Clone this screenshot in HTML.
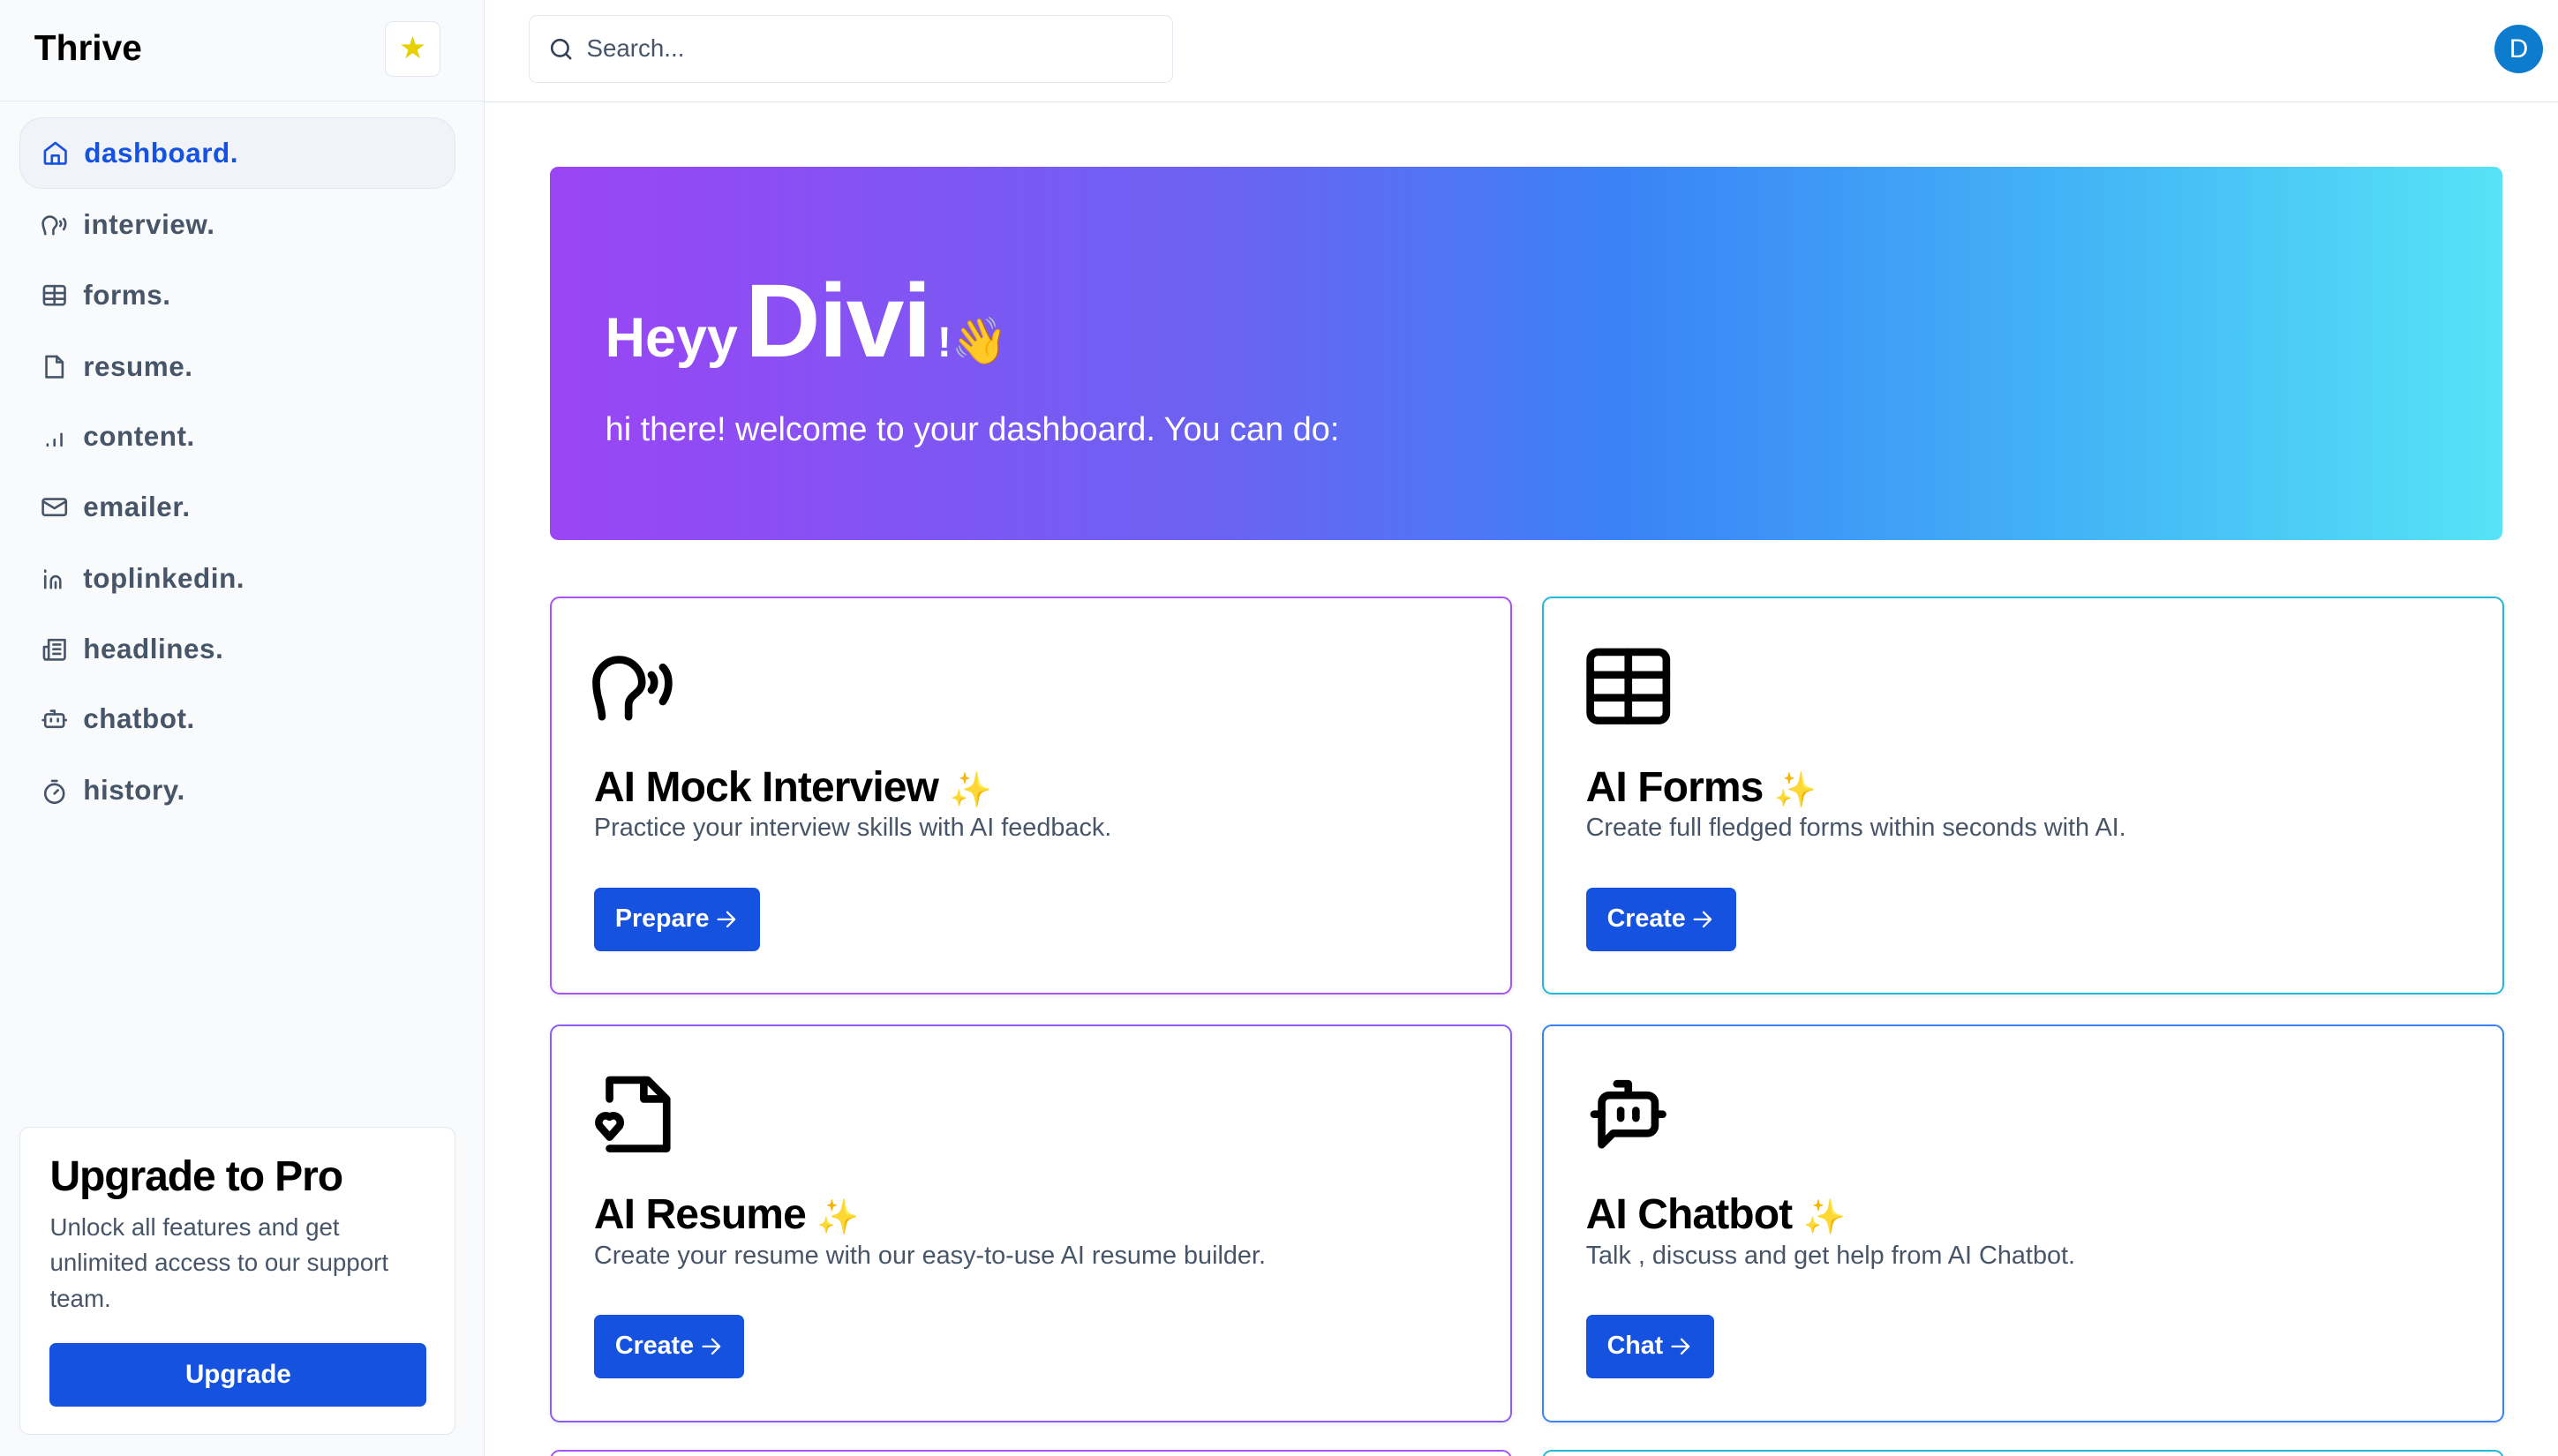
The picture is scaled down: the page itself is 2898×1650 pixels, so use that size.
<!DOCTYPE html>
<html><head><meta charset="utf-8"><style>
*{box-sizing:border-box;margin:0;padding:0}
html,body{width:2898px;height:1650px;overflow:hidden;background:#fff}
#w{zoom:1.8482;width:1568px;height:893px;position:relative;font-family:"Liberation Sans",sans-serif;color:#0f172a;overflow:hidden}
.abs{position:absolute}
#side{left:0;top:0;width:297px;height:893px;background:#f8fafc;border-right:1px solid #e2e8f0}
#sh{left:0;top:0;width:297px;height:62px;border-bottom:1px solid #e2e8f0}
.nav{position:absolute;left:12px;width:267px;height:44px;display:flex;align-items:center;padding-left:13px;font-size:17px;font-weight:bold;color:#475569;letter-spacing:.3px}
.nav svg{width:17px;height:17px;margin-right:9px;fill:none;stroke:currentColor;stroke-width:2;stroke-linecap:round;stroke-linejoin:round}
.card{position:absolute;width:590px;height:244px;border:1.5px solid;border-radius:6px;background:#fff;box-shadow:0 1px 3px rgba(0,0,0,.08)}
.card svg.ic{position:absolute;left:24px;top:26px;width:56px;height:56px;fill:none;stroke:#000;stroke-width:2;stroke-linecap:round;stroke-linejoin:round}
.card h3{position:absolute;left:26px;top:101px;font-size:26px;font-weight:bold;letter-spacing:-.5px;color:#000}
.card h3 span{font-size:21px}
.card p{position:absolute;left:26px;top:132px;font-size:15.6px;color:#475569}
.btn{position:absolute;left:26px;top:177px;height:39px;padding:0 13px;background:#1652e0;color:#fff;border-radius:4px;font-size:15.5px;font-weight:bold;display:flex;align-items:center}
.btn svg{width:15px;height:15px;margin-left:3px;fill:none;stroke:#fff;stroke-width:2;stroke-linecap:round;stroke-linejoin:round}
</style></head><body><div id="w">
<div id="side" class="abs">
<div id="sh" class="abs"></div>
<div class="abs" style="left:21px;top:17px;font-size:22px;font-weight:bold;color:#000">Thrive</div>
<div class="abs" style="left:236px;top:13px;width:34px;height:34px;border:1px solid #e2e8f0;border-radius:5px;background:#fff;color:#e6d000;font-size:19px;text-align:center;line-height:32px">★</div>
<div class="nav" style="top:72px;background:#f0f3f8;border:1px solid #e2e8f0;border-radius:14px;color:#1652e0"><svg viewBox="0 0 24 24"><path d="M3 10l9-7 9 7v10a1 1 0 0 1-1 1H4a1 1 0 0 1-1-1z"/><path d="M9 21v-7h6v7"/></svg>dashboard.</div>
<div class="nav" style="top:116px"><svg viewBox="0 0 24 24"><path d="M4 20c0-3-2-5-2-9a6 6 0 0 1 12 0c0 3-3 3-3 6v3"/><path d="M17 9c1 1 1 3 0 4M20 7c2 2 2 6 0 9"/></svg>interview.</div>
<div class="nav" style="top:159px"><svg viewBox="0 0 24 24"><rect x="3" y="4" width="18" height="16" rx="2"/><path d="M3 10h18M3 15h18M12 4v16"/></svg>forms.</div>
<div class="nav" style="top:203px"><svg viewBox="0 0 24 24"><path d="M14 3H5v18h14V8z"/><path d="M14 3v5h5"/></svg>resume.</div>
<div class="nav" style="top:246px"><svg viewBox="0 0 24 24"><path d="M6 19v-1M12 19v-5M18 19V9"/></svg>content.</div>
<div class="nav" style="top:289px"><svg viewBox="0 0 24 24"><rect x="2" y="5" width="20" height="14" rx="2"/><path d="M2 7l10 6 10-6"/></svg>emailer.</div>
<div class="nav" style="top:333px"><svg viewBox="0 0 24 24"><path d="M4 10v10M4 5v1M9 20v-6a4 4 0 0 1 8 0v6M13 20v-5"/></svg>toplinkedin.</div>
<div class="nav" style="top:376px"><svg viewBox="0 0 24 24"><path d="M4 21h15a2 2 0 0 0 2-2V4H7v15a2 2 0 0 1-4 0v-9h4"/><path d="M11 8h6M11 12h6M11 16h6"/></svg>headlines.</div>
<div class="nav" style="top:419px"><svg viewBox="0 0 24 24"><rect x="4" y="8" width="16" height="11" rx="2"/><path d="M12 8V5h-3M2 13h2M20 13h2M9 12v2M15 12v2"/></svg>chatbot.</div>
<div class="nav" style="top:463px"><svg viewBox="0 0 24 24"><circle cx="12" cy="14" r="8"/><path d="M10 3h4M12 14l3-3"/></svg>history.</div>
<div class="abs" style="left:12px;top:691px;width:267px;height:189px;background:#fff;border:1px solid #e2e8f0;border-radius:6px">
<div class="abs" style="left:18px;top:15px;font-size:26px;font-weight:bold;letter-spacing:-.6px;color:#000">Upgrade to Pro</div>
<div class="abs" style="left:18px;top:50px;width:240px;font-size:15px;line-height:22px;color:#475569">Unlock all features and get unlimited access to our support team.</div>
<div class="abs" style="left:18px;top:132px;width:231px;height:39px;background:#1652e0;border-radius:4px;color:#fff;font-size:16px;font-weight:bold;text-align:center;line-height:39px">Upgrade</div>
</div>
</div>
<div class="abs" style="left:297px;top:62px;width:1271px;height:1px;background:#e2e8f0"></div>
<div class="abs" style="left:324px;top:9px;width:395px;height:42px;border:1px solid #e2e8f0;border-radius:5px;display:flex;align-items:center;padding-left:11px;font-size:15px;color:#475569"><svg width="17" height="17" viewBox="0 0 24 24" fill="none" stroke="#334155" stroke-width="2" stroke-linecap="round" style="margin-right:7px"><circle cx="11" cy="11" r="7"/><path d="M20 20l-4-4"/></svg>Search...</div>
<div class="abs" style="left:1529px;top:15px;width:30px;height:30px;border-radius:50%;background:#0d7ccf;color:#fff;font-size:16px;text-align:center;line-height:30px">D</div>
<div class="abs" style="left:337px;top:102px;width:1197px;height:229px;border-radius:5px;background:linear-gradient(90deg,#9b45f5 0%,#6a63f2 35%,#3a83f6 55%,#44b8f6 80%,#56e3f6 100%)">
<div class="abs" style="left:34px;top:58px;color:#fff;font-weight:bold;white-space:nowrap"><span style="font-size:34px">Heyy</span> <span style="font-size:64px;letter-spacing:-1px">Divi</span> <span style="font-size:26px">!</span><span style="font-size:28px">👋</span></div>
<div class="abs" style="left:34px;top:150px;color:#fff;font-size:20.5px">hi there! welcome to your dashboard. You can do:</div>
</div>
<div class="card" style="left:337px;top:366px;border-color:#a855f7"><svg class="ic" viewBox="0 0 24 24"><path d="M3 20c0-3-1.5-5-1.5-9a6 6 0 0 1 12 0c0 3-3.5 3-3.5 6v3"/><path d="M16 9c1 1 1 3 0 4M19 7c2 2 2 6 0 9"/></svg><h3>AI Mock Interview <span>✨</span></h3><p>Practice your interview skills with AI feedback.</p><div class="btn">Prepare<svg viewBox="0 0 24 24"><path d="M4 12h16M13 5l7 7-7 7"/></svg></div></div>
<div class="card" style="left:945px;top:366px;border-color:#22b8d6"><svg class="ic" viewBox="0 0 24 24"><rect x="2" y="3" width="20" height="18" rx="2"/><path d="M2 9h20M2 15h20M12 3v18"/></svg><h3>AI Forms <span>✨</span></h3><p>Create full fledged forms within seconds with AI.</p><div class="btn">Create<svg viewBox="0 0 24 24"><path d="M4 12h16M13 5l7 7-7 7"/></svg></div></div>
<div class="card" style="left:337px;top:628px;border-color:#8b5cf6"><svg class="ic" viewBox="0 0 24 24"><path d="M5 8V3h10l5 5v13H5"/><path d="M14 3v5h5"/><path d="M5 18l-2.5-2.8a1.8 1.8 0 0 1 2.5-2.5 1.8 1.8 0 0 1 2.5 2.5z"/></svg><h3>AI Resume <span>✨</span></h3><p>Create your resume with our easy-to-use AI resume builder.</p><div class="btn">Create<svg viewBox="0 0 24 24"><path d="M4 12h16M13 5l7 7-7 7"/></svg></div></div>
<div class="card" style="left:945px;top:628px;border-color:#3b82f6"><svg class="ic" viewBox="0 0 24 24"><path d="M5 9a2 2 0 0 1 2-2h10a2 2 0 0 1 2 2v6a2 2 0 0 1-2 2H8l-3 3z"/><path d="M12 7V4H9M3 12h2M19 12h2M10 11v2M14 11v2"/></svg><h3>AI Chatbot <span>✨</span></h3><p>Talk , discuss and get help from AI Chatbot.</p><div class="btn">Chat<svg viewBox="0 0 24 24"><path d="M4 12h16M13 5l7 7-7 7"/></svg></div></div>
<div class="abs" style="left:337px;top:889px;width:590px;height:20px;border:1.5px solid #a855f7;border-radius:6px"></div>
<div class="abs" style="left:945px;top:889px;width:590px;height:20px;border:1.5px solid #22b8d6;border-radius:6px"></div>
</div></body></html>
